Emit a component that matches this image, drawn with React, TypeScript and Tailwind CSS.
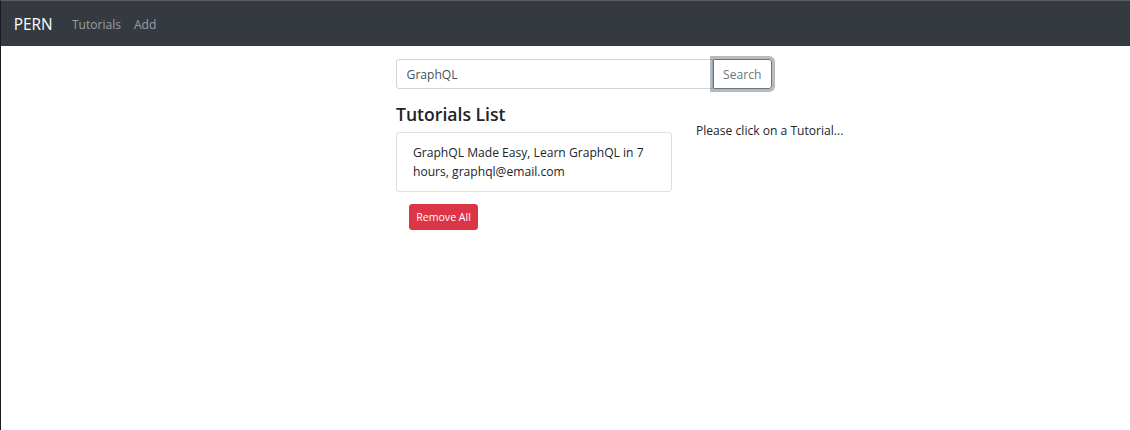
export default function App() {
  return (
    <div
      className="min-h-[430px] border-l border-t border-l-[#1b1b1b] border-t-[#5e5e5e] bg-white text-[12.1px] leading-[19.2px] text-[#212529]"
      style={{ fontFamily: '"Open Sans", "Noto Sans", sans-serif' }}
    >
      <nav className="flex h-[45px] items-center bg-[#343a40] px-[12.8px] pt-[2px]">
        <a className="mr-[12.8px] text-[15.4px] leading-[24px] text-white">PERN</a>
        <div className="flex">
          <a className="px-[6.4px] text-[rgba(255,255,255,0.5)]">Tutorials</a>
          <a className="px-[6.4px] text-[rgba(255,255,255,0.5)]">Add</a>
        </div>
      </nav>

      <div className="ml-[383px] mt-[13px] flex w-[600px] flex-wrap">
        <div className="w-[400px] px-[12px]">
          <div className="mb-[13px] flex h-[30px]">
            <input
              defaultValue="GraphQL"
              className="min-w-0 flex-1 rounded-l-[3px] border border-[#ced4da] px-[9.6px] pt-[1px] text-[12.1px] text-[#495057] outline-none"
            />
            <button className="rounded-r-[3px] border border-[#6c757d] px-[9.6px] pt-[1px] text-[#6c757d] shadow-[0_0_0_3px_rgba(108,117,125,0.5)]">
              Search
            </button>
          </div>
        </div>

        <div className="w-[300px] px-[12px]">
          <h4 className="mb-[7px] pt-[1px] text-[17.6px] font-semibold leading-[23px]">Tutorials List</h4>
          <ul className="-mt-[1px] rounded-[3px] border border-[#dfdfdf]">
            <li className="px-[16px] py-[9.6px]">
              GraphQL Made Easy, Learn GraphQL in 7 hours, graphql@email.com
            </li>
          </ul>
          <button className="m-[12.8px] rounded-[3px] border border-[#dc3545] bg-[#dc3545] px-[6.4px] py-[3.2px] text-[10.6px] leading-[16.8px] text-white">
            Remove All
          </button>
        </div>

        <div className="w-[300px] px-[12px]">
          <br />
          <p>Please click on a Tutorial...</p>
        </div>
      </div>
    </div>
  );
}
